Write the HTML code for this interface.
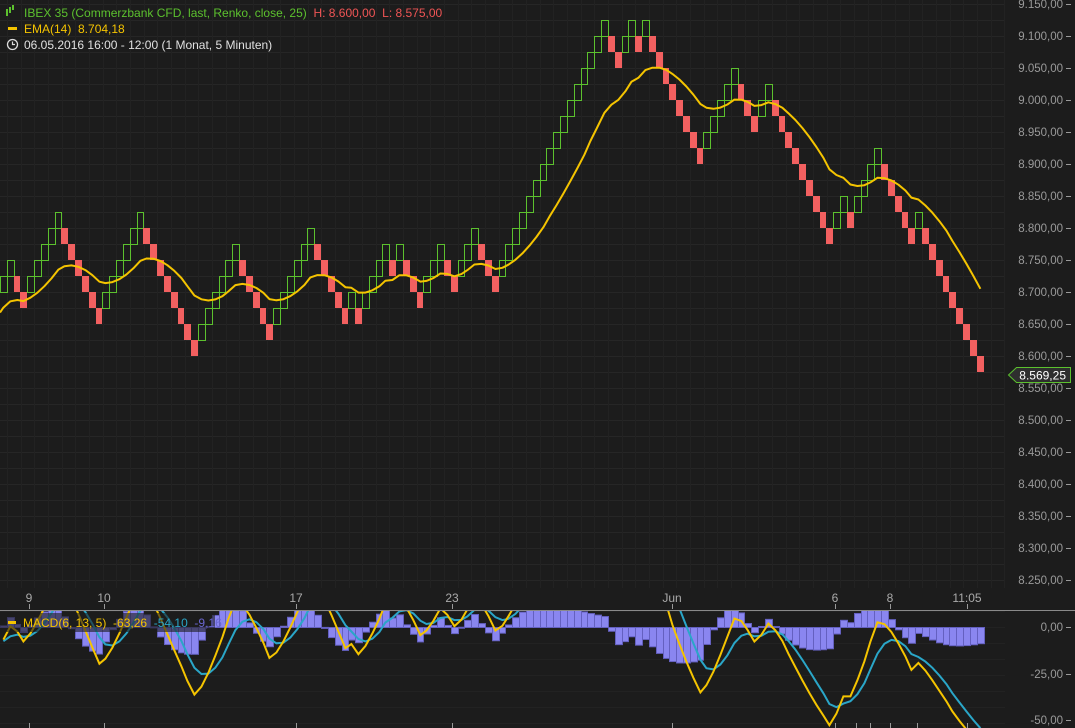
<!DOCTYPE html>
<html><head><meta charset="utf-8"><style>
html,body{margin:0;padding:0;background:#1c1c1c;width:1075px;height:728px;overflow:hidden}
svg{display:block}
text{font-family:"Liberation Sans",sans-serif;white-space:pre}
</style></head><body>
<svg id="s" width="1075" height="728" xmlns="http://www.w3.org/2000/svg"></svg>
<script>
var NS="http://www.w3.org/2000/svg",S=document.getElementById('s');
function el(t,a,txt){var e=document.createElementNS(NS,t);for(var k in a)e.setAttribute(k,a[k]);if(txt!=null)e.textContent=txt;S.appendChild(e);return e;}
el('rect',{x:0,y:0,width:1075,height:728,fill:'#1c1c1c'});
for(var gy=4;gy<590;gy+=16)el('line',{x1:0,x2:1005,y1:gy+.5,y2:gy+.5,stroke:'#262626'});
for(var gx=7;gx<1005;gx+=13.66)el('line',{x1:Math.round(gx)+.5,x2:Math.round(gx)+.5,y1:0,y2:588,stroke:'#222'});
for(var gy=611;gy<728;gy+=16)el('line',{x1:0,x2:1005,y1:gy+.5,y2:gy+.5,stroke:'#222'});
var tp=[8675,8750,8675,8825,8650,8825,8600,8775,8625,8800,8650,8700,8650,8775,8725,8775,8675,8775,8700,8800,8700,9125,9050,9125,9075,9125,8900,9050,8950,9025,8775,8850,8800,8925,8775,8825,8575];
var br=[];
for(var i=0;i<tp.length-1;i++){var a=tp[i],b=tp[i+1];
 if(b>a){for(var p=a+25;p<=b-25;p+=25)br.push({b:p,u:1});}
 else{for(var p=a-50;p>=b;p-=25)br.push({b:p,u:0});}}
var W=6.83;function Y(p){return 228-(p-8800)*0.64;}
function X(k){return Math.round(k*W);}
var closes=[];
br.forEach(function(o,k){var x=X(k),w=X(k+1)-x,y=Y(o.b+25);
 if(o.u){el('rect',{x:x+.5,y:y+.5,width:w,height:16,fill:'none',stroke:'#5cc12e','stroke-width':1});closes.push(o.b+25);}
 else{el('rect',{x:x,y:y,width:w,height:16,fill:'#f26060'});closes.push(o.b);}
});
var e=8668,al=2/15,pts=[];
closes.forEach(function(c,k){e=e+al*(c-e);pts.push((X(k)+3.4).toFixed(1)+','+Y(e).toFixed(1));});
pts[0]='0,'+Y(8668).toFixed(1)+' '+pts[0];
el('polyline',{points:pts.join(' '),fill:'none',stroke:'#f5c400','stroke-width':2,'stroke-linejoin':'round'});
for(var i=0;i<=18;i++){var p=9150-50*i,y=Y(p);var s=(p/1000).toFixed(3)+',00';
 el('text',{x:1063,y:y+4,'text-anchor':'end','font-size':11.5,fill:'#9a9a9a'},s);
 el('line',{x1:1066,x2:1071,y1:y+.5,y2:y+.5,stroke:'#9a9a9a'});}
el('polygon',{points:'1008.5,375 1016.5,367.5 1070.5,367.5 1070.5,382.5 1016.5,382.5',fill:'#2e2e2e',stroke:'#5cc12e'});
el('text',{x:1066,y:379.5,'text-anchor':'end','font-size':12,fill:'#fff'},'8.569,25');
[[29,'9'],[104,'10'],[296,'17'],[452,'23'],[672,'Jun'],[835,'6'],[890,'8'],[967,'11:05']].forEach(function(t){
 el('text',{x:t[0],y:602,'text-anchor':'middle','font-size':12,fill:'#aaa'},t[1]);
 el('line',{x1:t[0]+.5,x2:t[0]+.5,y1:604,y2:609,stroke:'#999'});
 el('line',{x1:t[0]+.5,x2:t[0]+.5,y1:723,y2:728,stroke:'#999'});});
[856,870,917].forEach(function(x){el('line',{x1:x+.5,x2:x+.5,y1:723,y2:728,stroke:'#999'});});
el('line',{x1:0,x2:1075,y1:610.5,y2:610.5,stroke:'#8a8a8a'});
function ema(arr,n,seed){var a=2/(n+1),v=seed,o=[];arr.forEach(function(c){v=v+a*(c-v);o.push(v);});return o;}
var e6=ema(closes,6,8700),e13=ema(closes,13,8712),m=e6.map(function(v,i){return v-e13[i];});
var sg=ema(m,5,-8),h=m.map(function(v,i){return v-sg[i];});
function MY(v){return 627-v*1.88;}
var g=document.createElementNS(NS,'g');
var cp=el('clipPath',{id:'c'});var cr=document.createElementNS(NS,'rect');cr.setAttribute('x',0);cr.setAttribute('y',611);cr.setAttribute('width',1005);cr.setAttribute('height',117);cp.appendChild(cr);
g.setAttribute('clip-path','url(#c)');S.appendChild(g);
function gel(t,a){var x=document.createElementNS(NS,t);for(var k in a)x.setAttribute(k,a[k]);g.appendChild(x);return x;}
h.forEach(function(v,k){var y0=627,y1=MY(v),x=X(k);gel('rect',{x:x+.5,y:Math.min(y0,y1)+.5,width:X(k+1)-x,height:Math.max(1,Math.abs(y1-y0)),fill:'#8a86f0',stroke:'#6460c0','stroke-width':1});});
function line(arr,col){var p=arr.map(function(v,k){return (X(k)+3.4).toFixed(1)+','+MY(v).toFixed(1);});gel('polyline',{points:p.join(' '),fill:'none',stroke:col,'stroke-width':2});}
line(sg,'#2aa6c8');line(m,'#f5c400');
[[627,'0,00'],[674,'-25,00'],[720,'-50,00']].forEach(function(t){
 el('text',{x:1063,y:t[0]+4,'text-anchor':'end','font-size':11.5,fill:'#9a9a9a'},t[1]);
 el('line',{x1:1066,x2:1071,y1:t[0]+.5,y2:t[0]+.5,stroke:'#9a9a9a'});});
el('rect',{x:0,y:613,width:215,height:19,fill:'#1c1c1c','fill-opacity':0.6});
el('rect',{x:8,y:621,width:8,height:3,fill:'#f5c400'});
var t=el('text',{x:23,y:627,'font-size':12,fill:'#f5c400'});
t.innerHTML='MACD(6, 13, 5)  -63,26  <tspan fill="#2aa6c8">-54,10</tspan>  <tspan fill="#6a66d0">-9,16</tspan>';
el('rect',{x:6,y:9,width:2,height:7,fill:'#5cc12e'});el('rect',{x:9,y:7,width:2,height:6,fill:'#5cc12e'});el('rect',{x:12,y:5,width:2,height:5,fill:'#5cc12e'});
var t1=el('text',{x:24,y:17,'font-size':12,fill:'#5cc12e'});
t1.innerHTML='IBEX 35 (Commerzbank CFD, last, Renko, close, 25)  <tspan fill="#f05555">H: 8.600,00  L: 8.575,00</tspan>';
el('rect',{x:8,y:27,width:9,height:3,fill:'#f5c400'});
el('text',{x:24,y:33,'font-size':12,fill:'#f5c400'},'EMA(14)  8.704,18');
el('circle',{cx:12.5,cy:44.5,r:5,fill:'none',stroke:'#ddd','stroke-width':1.3});
el('path',{d:'M12.5 41.5V44.5H15',fill:'none',stroke:'#ddd','stroke-width':1.2});
el('text',{x:24,y:49,'font-size':12,fill:'#e0e0e0'},'06.05.2016 16:00 - 12:00 (1 Monat, 5 Minuten)');
</script>
</body></html>
